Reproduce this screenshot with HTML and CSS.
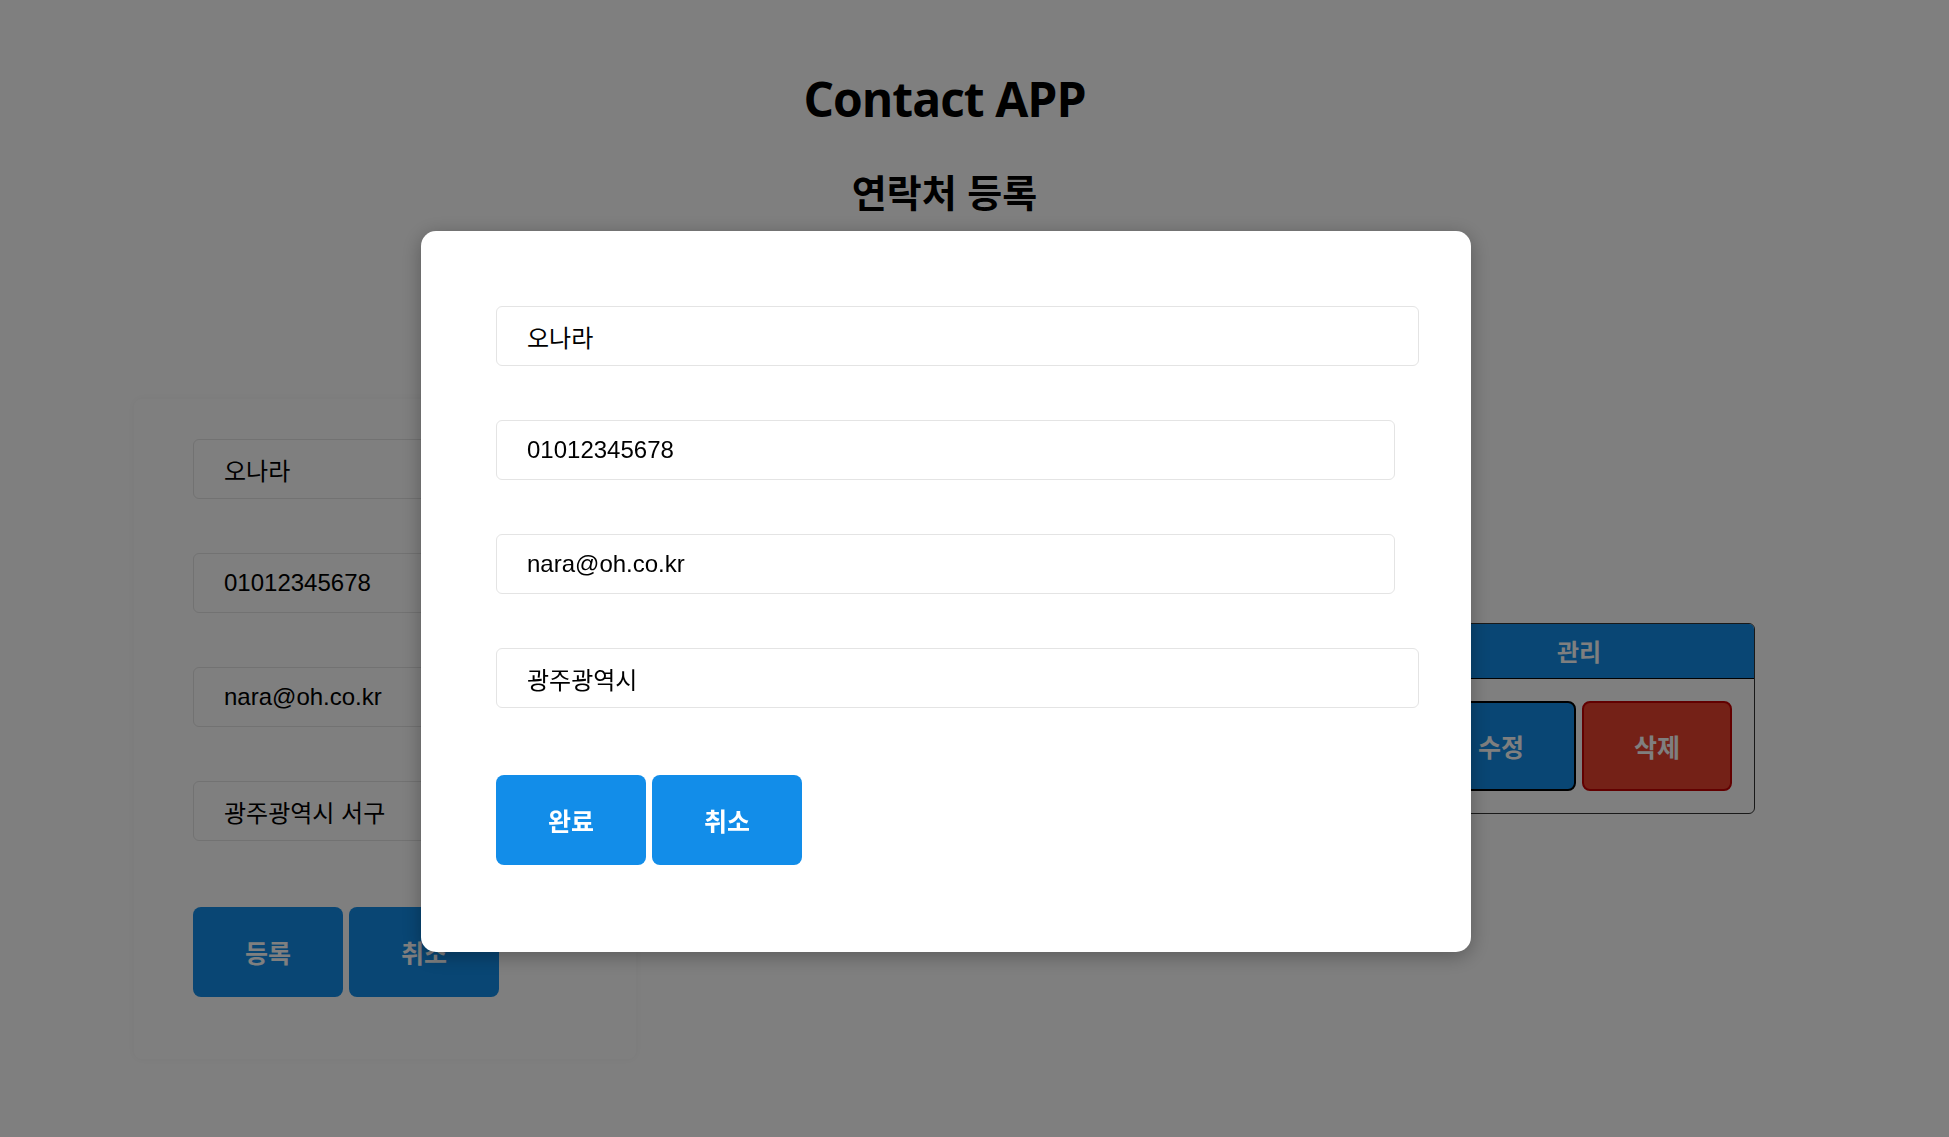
FILE: index.html
```html
<!DOCTYPE html>
<html lang="ko">
<head>
<meta charset="utf-8">
<title>Contact APP</title>
<link rel="stylesheet" href="styles.css">
</head>
<body>
<div class="app">
  <h1 class="title">Contact APP</h1>
  <h2 class="subtitle">연락처 등록</h2>
  <div class="content">
    <form class="card">
      <input class="field" type="text" value="오나라">
      <input class="field" type="tel" value="01012345678">
      <input class="field" type="email" value="nara@oh.co.kr">
      <input class="field" type="text" value="광주광역시 서구">
      <div class="btn-row">
        <button type="button" class="btn btn-primary">등록</button>
        <button type="button" class="btn btn-primary">취소</button>
      </div>
    </form>
    <table class="list">
      <thead>
        <tr>
          <th>이름</th>
          <th>전화번호</th>
          <th>이메일</th>
          <th>주소</th>
          <th class="col-manage">관리</th>
        </tr>
      </thead>
      <tbody>
        <tr>
          <td>오나라</td>
          <td>01012345678</td>
          <td>nara@oh.co.kr</td>
          <td>광주광역시 서구</td>
          <td class="col-manage">
            <div class="actions">
              <button type="button" class="btn btn-edit">수정</button>
              <button type="button" class="btn btn-delete">삭제</button>
            </div>
          </td>
        </tr>
      </tbody>
    </table>
  </div>
</div>

<div class="overlay">
  <form class="modal">
    <input class="field field-wide" type="text" value="오나라">
    <input class="field field-narrow" type="tel" value="01012345678">
    <input class="field field-narrow" type="email" value="nara@oh.co.kr">
    <input class="field field-wide" type="text" value="광주광역시">
    <div class="btn-row">
      <button type="button" class="btn btn-primary">완료</button>
      <button type="button" class="btn btn-primary">취소</button>
    </div>
  </form>
</div>
</body>
</html>
```

FILE: styles.css
```css
* {
  box-sizing: border-box;
}

html, body {
  margin: 0;
  padding: 0;
  background: #ffffff;
}

body {
  font-family: "Noto Sans CJK KR", "Noto Sans", sans-serif;
  font-size: 24px;
  color: #000;
  overflow: hidden;
  height: 1137px;
}

.app {
  width: 1621px;
  margin-left: 134px;
}

.title {
  margin: 75px 0 0;
  font-family: "Open Sans", "Noto Sans CJK KR", sans-serif;
  font-weight: 700;
  font-size: 48px;
  line-height: 48px;
  letter-spacing: -1px;
  text-align: center;
}

.subtitle {
  margin: 48px 0 0;
  font-family: "Noto Sans CJK KR", sans-serif;
  font-weight: 700;
  font-size: 38px;
  line-height: 40px;
  letter-spacing: 0;
  text-align: center;
}

.content {
  display: flex;
  align-items: flex-start;
  margin-top: 188px;
}

.card {
  width: 502px;
  padding: 40px 59px 62px;
  border-radius: 8px;
  background: #fff;
  box-shadow: 0 0 10px rgba(0, 0, 0, 0.05);
}

.field {
  display: block;
  width: 100%;
  height: 60px;
  margin: 0 0 54px;
  padding: 0 30px;
  border: 1px solid #e4e4e4;
  border-radius: 6px;
  background: #fff;
  font-family: "Liberation Sans", "Noto Sans CJK KR", sans-serif;
  font-size: 24px;
  color: #000;
  outline: none;
}

.btn-row {
  display: flex;
  gap: 6px;
  margin-top: 66px;
}

.btn {
  width: 150px;
  height: 90px;
  border: none;
  border-radius: 8px;
  font-family: "Noto Sans CJK KR", sans-serif;
  font-weight: 700;
  font-size: 25px;
  color: #fff;
  cursor: pointer;
  padding: 0;
}

.btn-primary {
  background: #128de9;
}

.list {
  margin-left: auto;
  margin-top: 224px;
  width: 1065px;
  border: 1px solid #333;
  border-radius: 6px;
  border-collapse: separate;
  border-spacing: 0;
  font-size: 24px;
}

.list th {
  background: #128de9;
  color: #fff;
  font-weight: 700;
  line-height: 30px;
  padding: 12px 10px;
  border-bottom: 1px solid #000;
  text-align: center;
}

.list th:first-child {
  border-top-left-radius: 5px;
}

.list th:last-child {
  border-top-right-radius: 5px;
}

.list td {
  padding: 22px;
  text-align: center;
  font-family: "Liberation Sans", "Noto Sans CJK KR", sans-serif;
}

.list .col-manage {
  width: 350px;
}

.actions {
  display: flex;
  gap: 6px;
}

.btn-edit {
  background: #128de9;
  border: 2px solid #000;
}

.btn-delete {
  background: #e8432f;
  border: 2px solid #c40000;
}

.overlay {
  position: fixed;
  inset: 0;
  background: rgba(0, 0, 0, 0.5);
}

.modal {
  position: absolute;
  left: 421px;
  top: 231px;
  width: 1050px;
  padding: 75px 52px 87px 75px;
  border-radius: 15px;
  background: #fff;
  box-shadow: 0 4px 20px rgba(0, 0, 0, 0.3);
}

.modal .field-wide {
  width: 923px;
}

.modal .field-narrow {
  width: 899px;
}

.modal .btn-row {
  margin-top: 67px;
}
```
